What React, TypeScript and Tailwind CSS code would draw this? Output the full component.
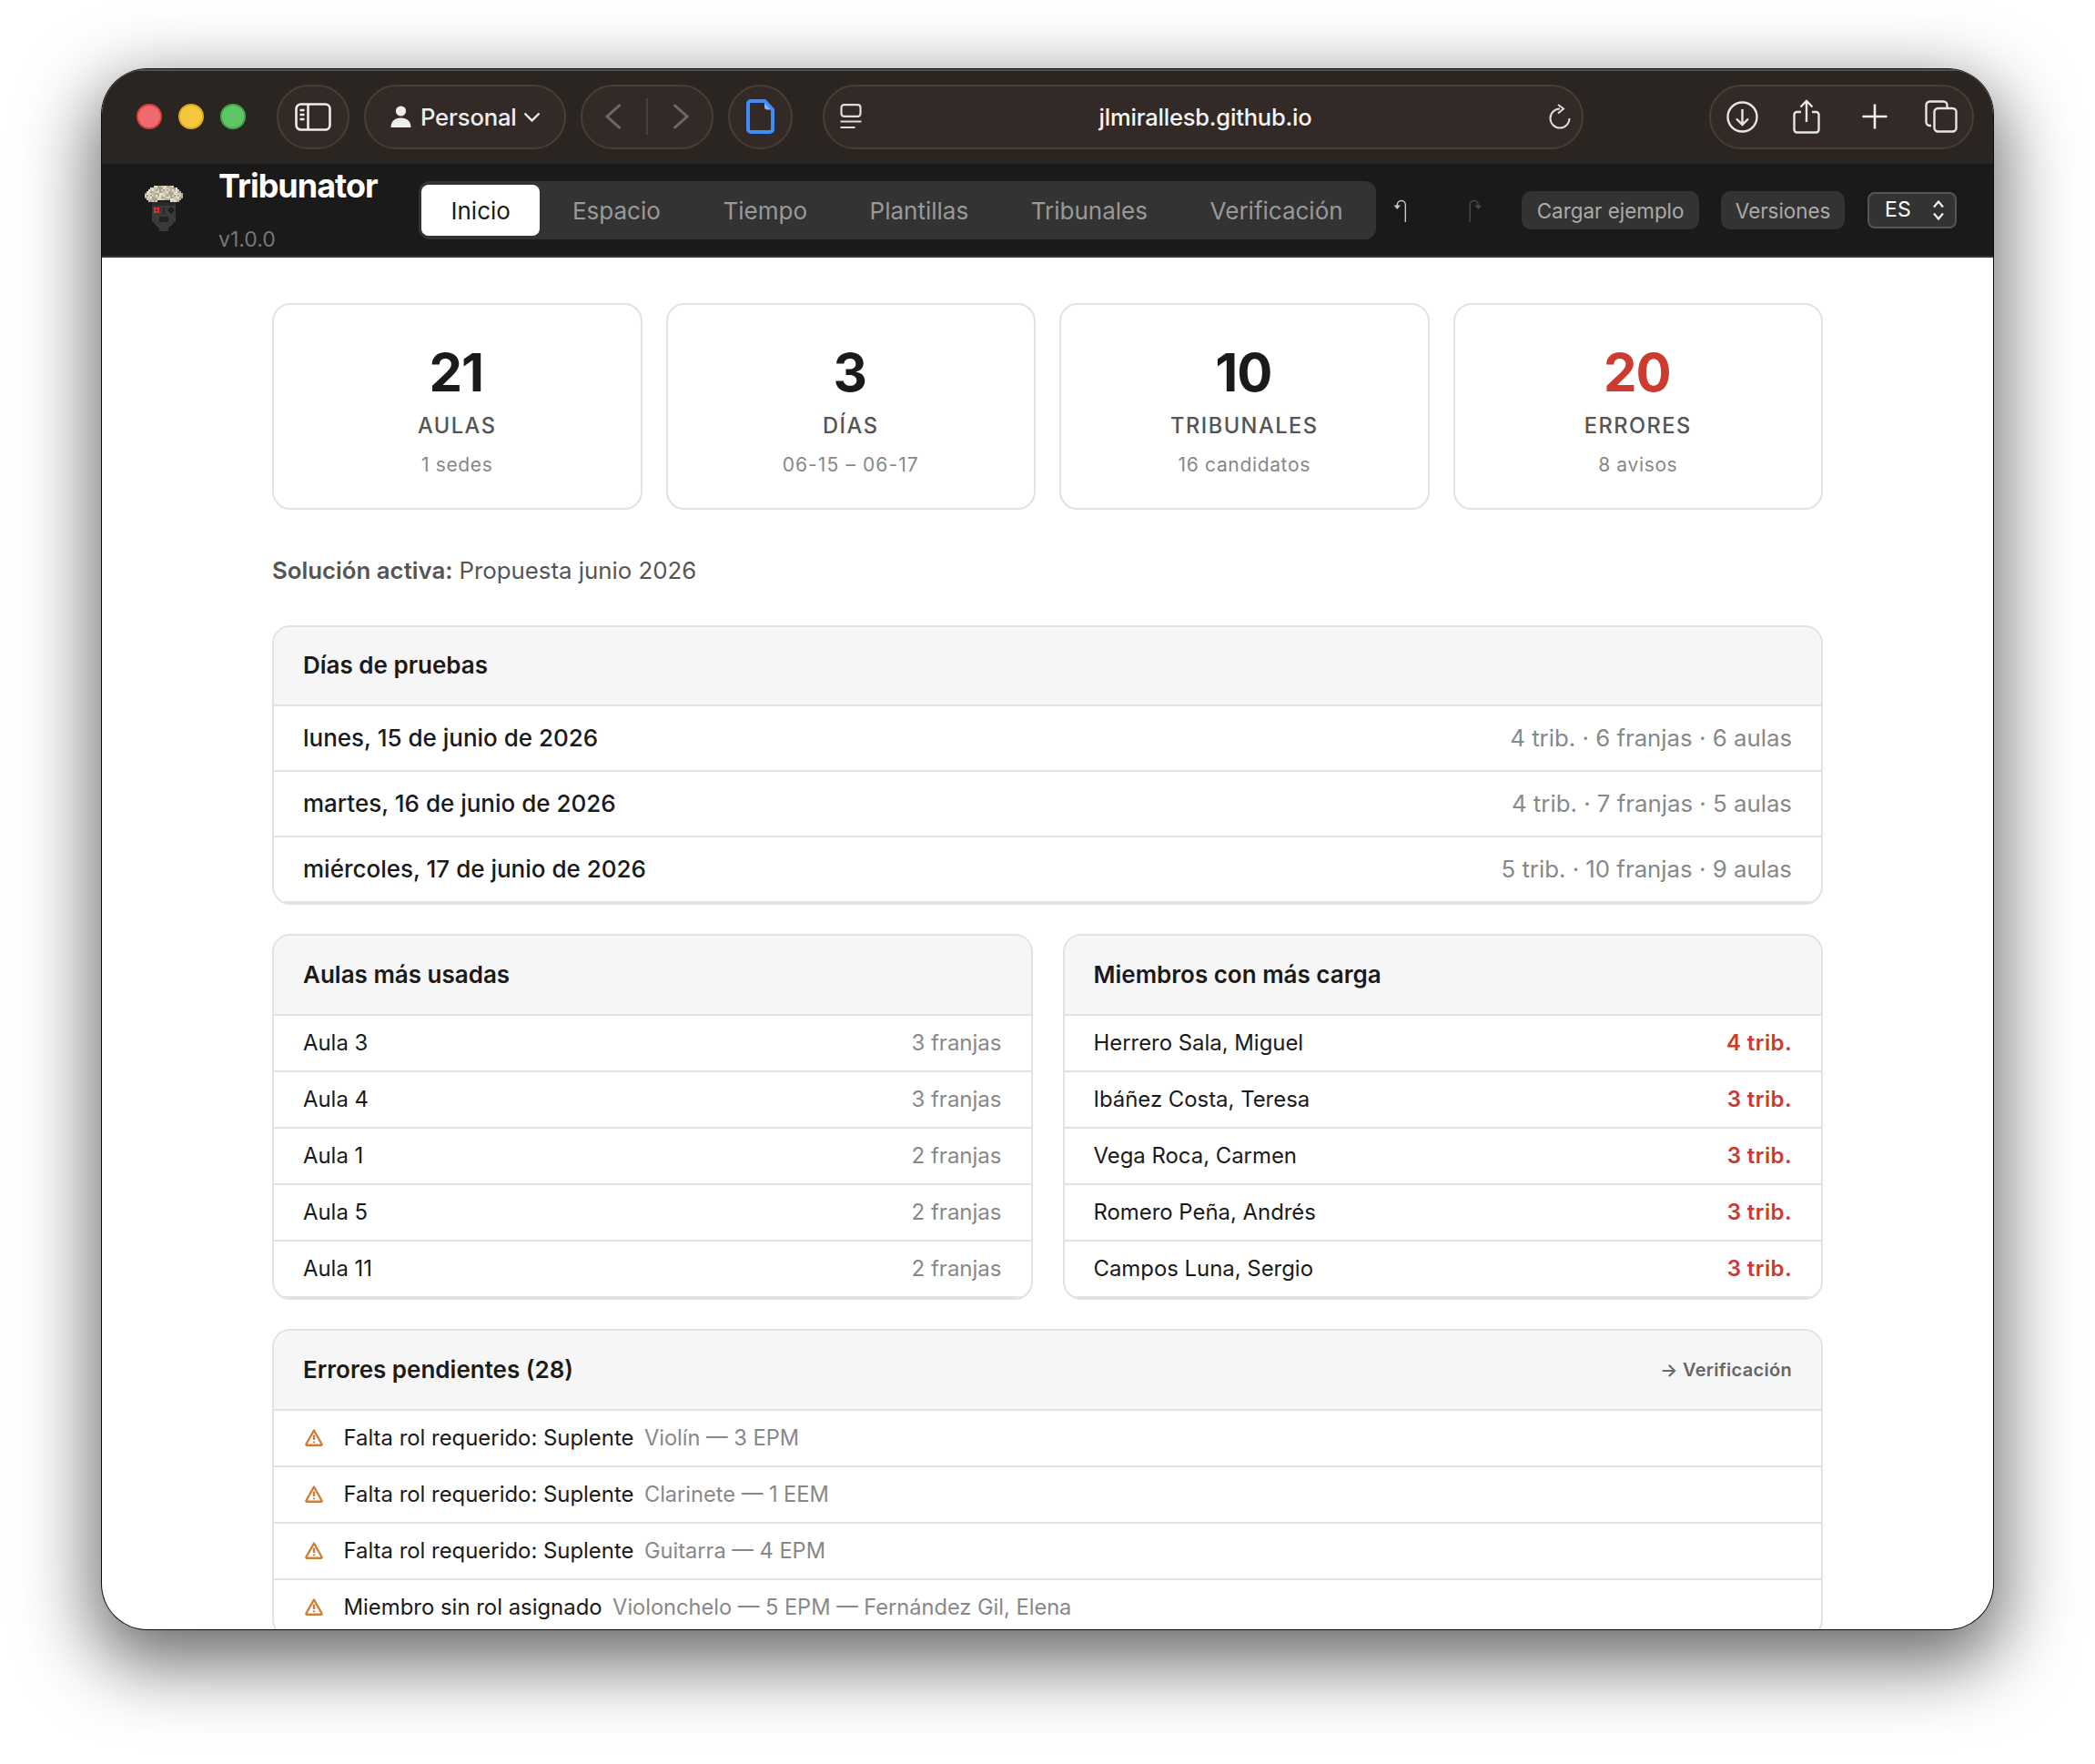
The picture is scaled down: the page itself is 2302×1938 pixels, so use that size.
import React from "react";

function Logo() {
  const cells: React.ReactNode[] = [];
  const capRows: [number, number][] = [[5, 15], [3, 17], [2, 18], [1, 19], [0, 20], [0, 20], [0, 20], [1, 19], [2, 18]];
  const faceRows: [number, number][] = [];
  for (let y = 9; y < 20; y++) faceRows[y] = [4, 16];
  faceRows[20] = [5, 15]; faceRows[21] = [6, 14]; faceRows[22] = [7, 13]; faceRows[23] = [8, 12]; faceRows[24] = [8, 12];
  const beige = ["#d6cfbb", "#b5ad98", "#e8e2d2", "#c9c1ac", "#a8a08b"];
  const dark = ["#3c3c3c", "#343434", "#414141", "#383838"];
  for (let y = 9; y < 25; y++) {
    const [a, b] = faceRows[y];
    for (let x = a; x <= b; x++) {
      let c = dark[(x * 3 + y * 5) % 4];
      if (y === 9 || y === 10) c = "#2a2a2a";
      if (x === 10 && y > 11 && y < 16) c = "#2c2c2c";
      if (y >= 12 && y <= 14 && x >= 5 && x <= 7) c = (y === 13 && x === 6) ? "#6d1f1c" : "#d8302a";
      if (y >= 12 && y <= 14 && x >= 13 && x <= 15) c = (x + y) % 2 === 0 ? "#141414" : "#2a2a2a";
      if (y >= 17 && y <= 19 && x >= 8 && x <= 12) c = "#222222";
      cells.push(<rect key={`f${x}-${y}`} x={x * 2} y={y * 2} width={2} height={2} fill={c} />);
    }
  }
  capRows.forEach(([a, b], y) => {
    for (let x = a; x <= b; x++) {
      if (y === 8 && x > 6 && x < 14) continue;
      const c = beige[(x * 7 + y * 11 + ((x * y) % 3)) % 5];
      cells.push(<rect key={`c${x}-${y}`} x={x * 2} y={y * 2} width={2} height={2} fill={c} />);
    }
  });
  return (
    <svg width="42" height="54" viewBox="0 0 42 54" className="shrink-0" shapeRendering="crispEdges">
      {cells}
    </svg>
  );
}

function Pill({ className, children }: { className: string; children: React.ReactNode }) {
  return (
    <div className={`h-[71px] rounded-full bg-[#332926] border-2 border-[#4a3d37] flex items-center shrink-0 ${className}`}>
      {children}
    </div>
  );
}

function TitleBar() {
  return (
    <div className="h-[104px] bg-[#2b2521] flex items-center pl-[38px] pb-[2px] shrink-0 border-t-2 border-[#55504c]">
      <div className="flex items-center gap-[18px] mr-[34px]">
        <span className="w-[28px] h-[28px] rounded-full border-2 bg-[#ee6a6e] border-[#d9403f]" />
        <span className="w-[28px] h-[28px] rounded-full border-2 bg-[#f4c73e] border-[#e2a822]" />
        <span className="w-[28px] h-[28px] rounded-full border-2 bg-[#60c565] border-[#43aa4b]" />
      </div>
      <Pill className="w-[80px] justify-center mr-[16px]">
        <svg width="40" height="31" viewBox="0 0 40 31" fill="none" stroke="#eeeeee" strokeWidth="2.6">
          <rect x="1.5" y="1.5" width="37" height="28" rx="5" />
          <path d="M14.5 1.5v28" />
          <path d="M5.5 8h5M5.5 13h5M5.5 18h5" strokeWidth="2.4" />
        </svg>
      </Pill>
      <Pill className="w-[222px] pl-[27px] mr-[16px]">
        <svg width="23" height="24" viewBox="0 0 23 24" fill="#eeeeee">
          <circle cx="11.5" cy="6" r="5.6" />
          <path d="M0.5 24c0-7 4.5-10.5 11-10.5s11 3.500 11 10.500z" />
        </svg>
        <span className="ml-[10px] pt-[2px] text-[25.7px] font-medium leading-none text-[#eeeeee] tracking-[-0.2px]">Personal</span>
        <svg width="19" height="11" viewBox="0 0 19 11" fill="none" stroke="#eeeeee" strokeWidth="2.4" className="ml-[7px]">
          <path d="M1.500 1.500l8 8 8-8" />
        </svg>
      </Pill>
      <Pill className="w-[146px] mr-[16px] justify-center">
        <svg width="20" height="30" viewBox="0 0 20 30" fill="none" stroke="#6f6864" strokeWidth="3">
          <path d="M17.500 2L3 15l14.500 13" />
        </svg>
        <span className="w-[2px] h-[40px] bg-[#4a3f3a] mx-[26px]" />
        <svg width="20" height="30" viewBox="0 0 20 30" fill="none" stroke="#6f6864" strokeWidth="3">
          <path d="M2.500 2L17 15 2.500 28" />
        </svg>
      </Pill>
      <Pill className="w-[71px] justify-center mr-[33px]">
        <svg width="31" height="38" viewBox="0 0 31 38" fill="none" stroke="#3f8cfb" strokeWidth="4" strokeLinejoin="round">
          <path d="M5 2h15.500L29 11.500V33a3 3 0 0 1-3 3H5a3 3 0 0 1-3-3V5a3 3 0 0 1 3-3z" />
          <path d="M20 4l7 7.500h-4a3 3 0 0 1-3-3z" fill="#7fb4ff" stroke="none" />
        </svg>
      </Pill>
      <Pill className="w-[836px] pl-[17px] pr-[12px] mr-[138px] justify-between">
        <svg width="24" height="28" viewBox="0 0 24 28" fill="none" stroke="#dddddd" strokeWidth="2.200">
          <rect x="1.500" y="1.200" width="21" height="12.600" rx="3" />
          <path d="M0.500 19.500h23M0.500 26h16" />
        </svg>
        <span className="pt-[2px] text-[25.5px] font-medium leading-none text-[#f4f4f4] tracking-[-0.2px]">jlmirallesb.github.io</span>
        <svg width="24" height="28" viewBox="0 0 24 28" fill="none" stroke="#dddddd" strokeWidth="2">
          <path d="M12 5.500a10.500 10.500 0 1 0 10.500 10.500" />
          <path d="M10 1l6 4.500-6 5" />
        </svg>
      </Pill>
      <Pill className="w-[291px] pl-[17px]">
        <svg width="35" height="35" viewBox="0 0 35 35" fill="none" stroke="#e6e6e6" strokeWidth="2.400">
          <circle cx="17.500" cy="17.500" r="16" />
          <path d="M17.500 9v17M11 19.500l6.500 6.500 6.500-6.500" />
        </svg>
        <svg width="30" height="38" viewBox="0 0 30 38" fill="none" stroke="#e6e6e6" strokeWidth="2.400" className="ml-[38px]">
          <path d="M9 14H4.500a3 3 0 0 0-3 3v16.500a3 3 0 0 0 3 3h21a3 3 0 0 0 3-3V17a3 3 0 0 0-3-3H21" />
          <path d="M15 25V2M8.500 8.500L15 2l6.500 6.500" />
        </svg>
        <svg width="28" height="28" viewBox="0 0 28 28" fill="none" stroke="#eeeeee" strokeWidth="2.600" className="ml-[45.500px]">
          <path d="M14 0.500v27M0.500 14h27" />
        </svg>
        <svg width="36" height="36" viewBox="0 0 36 36" fill="none" stroke="#e6e6e6" strokeWidth="2.400" className="ml-[41px]">
          <path d="M7 28H5.500a4 4 0 0 1-4-4V5.500a4 4 0 0 1 4-4h15a4 4 0 0 1 4 4V8" />
          <rect x="10.500" y="9" width="24" height="25.500" rx="4" />
        </svg>
      </Pill>
    </div>
  );
}

function Tab({ label, active }: { label: string; active?: boolean }) {
  return (
    <div
      className={
        active
          ? "h-[56px] px-[32.500px] mr-[-1px] pt-[2px] flex items-center rounded-[8px] bg-white text-[#1a1a1a] text-[26px] leading-none"
          : "h-[56px] px-[32px] pt-[2px] flex items-center rounded-[8px] text-[#999999] text-[26px] leading-none"
      }
    >
      {label}
    </div>
  );
}

function Header() {
  return (
    <div className="h-[103px] bg-[#1a1a1a] border-b-2 border-[#333333] flex items-center shrink-0">
      <div className="ml-[47px] mr-[39px]"><Logo /></div>
      <div className="w-[220px] h-full flex flex-col shrink-0">
        <div className="mt-[2px] text-[36px] leading-[44px] font-bold text-white tracking-[-1px]">Tribunator</div>
        <div className="mt-[24px] text-[23px] leading-[26px] text-[#777777]">v1.0.0</div>
      </div>
      <div className="h-[64px] rounded-[12px] bg-[#333333] flex items-center gap-[4.6px] pl-[3px] pr-[4px] shrink-0">
        <Tab label="Inicio" active />
        <Tab label="Espacio" />
        <Tab label="Tiempo" />
        <Tab label="Plantillas" />
        <Tab label="Tribunales" />
        <Tab label="Verificación" />
      </div>
      <svg width="15" height="25" viewBox="0 0 15 25" fill="none" stroke="#c8c8c8" strokeWidth="1.400" className="ml-[19px] mt-[2px] shrink-0">
        <path d="M13.300 25V6a4.500 4.500 0 0 0-9 0v1" />
        <path d="M0.500 6.500h7.500l-3.750 4.500z" fill="#c8c8c8" stroke="none" />
      </svg>
      <svg width="15" height="25" viewBox="0 0 15 25" fill="none" stroke="#4a4a4a" strokeWidth="1.400" className="ml-[68.500px] mt-[2px] shrink-0">
        <path d="M1.200 25V6a4.500 4.500 0 0 1 9 0v1" />
        <path d="M6.500 6.500h7.500l-3.750 4.500z" fill="#4a4a4a" stroke="none" />
      </svg>
      <button className="ml-[43px] h-[42px] w-[195px] pt-[3px] rounded-[10px] bg-[#333333] text-[#aaaaaa] text-[22.4px] leading-none">Cargar ejemplo</button>
      <button className="ml-[24px] h-[42px] w-[136px] pt-[3px] rounded-[10px] bg-[#333333] text-[#aaaaaa] text-[22.4px] leading-none">Versiones</button>
      <div className="ml-[25px] h-[40px] w-[98px] rounded-[8px] bg-[#333333] border-2 border-[#555555] flex items-center pl-[17px] text-white text-[23px] leading-none">
        <span>ES</span>
        <svg width="14" height="24" viewBox="0 0 14 24" fill="none" stroke="#f0f0f0" strokeWidth="2.200" className="ml-[23px]">
          <path d="M2 8.500l5-6 5 6M2 15.500l5 6 5-6" />
        </svg>
      </div>
    </div>
  );
}

function Stat({ n, label, sub, red, wide }: { n: string; label: string; sub: string; red?: boolean; wide?: boolean }) {
  return (
    <div className="h-[227px] rounded-[20px] border-2 border-[#e2e2e2] flex flex-col items-center pt-[44px]">
      <div className={red ? "pr-[2px] text-[58px] leading-[60px] font-bold text-[#cc3a30] tracking-[-1px]" : "pr-[2px] text-[58px] leading-[60px] font-bold text-[#1a1a1a] tracking-[-1px]"}>{n}</div>
      <div className="mt-[14px] text-[23.6px] leading-[30px] font-medium text-[#555555] tracking-[1.500px]">{label}</div>
      <div className={wide ? "mt-[14px] text-[21px] leading-[28px] text-[#888888] tracking-[1.100px]" : "mt-[14px] text-[21px] leading-[28px] text-[#888888] tracking-[0.650px]"}>{sub}</div>
    </div>
  );
}

function PanelHead({ title, right, short }: { title: string; right?: string; short?: boolean }) {
  return (
    <div className={short ? "h-[86.500px] bg-[#f6f6f6] border-b-2 border-[#e2e2e2] flex items-center justify-between px-[32px] shrink-0" : "h-[88px] bg-[#f6f6f6] border-b-2 border-[#e2e2e2] flex items-center justify-between px-[32px] shrink-0"}>
      <span className="text-[26px] font-semibold leading-none text-[#1a1a1a]">{title}</span>
      {right && <span className="text-[20px] font-semibold leading-none text-[#666666] tracking-[0.300px]">{right}</span>}
    </div>
  );
}

function DayRow({ l, r }: { l: string; r: string }) {
  return (
    <div className="h-[72px] border-b-2 border-[#e2e2e2] flex items-center justify-between px-[32px]">
      <span className="text-[26px] font-medium leading-none text-[#1a1a1a]">{l}</span>
      <span className="text-[25.8px] leading-none text-[#888888]">{r}</span>
    </div>
  );
}

function ListRow({ l, r, red }: { l: string; r: string; red?: boolean }) {
  return (
    <div className="h-[62px] border-b-2 border-[#e2e2e2] flex items-center justify-between px-[32px]">
      <span className="text-[23.9px] leading-none text-[#1a1a1a]">{l}</span>
      <span className={red ? "text-[24px] font-semibold leading-none text-[#cc3a30] tracking-[0.400px]" : "text-[24px] leading-none text-[#888888]"}>{r}</span>
    </div>
  );
}

function WarnRow({ t, d }: { t: string; d: string }) {
  return (
    <div className="h-[62px] border-b-2 border-[#e2e2e2] flex items-center pl-[34px] shrink-0">
      <svg width="20" height="19" viewBox="0 0 20 19" fill="none" stroke="#cc7f38" strokeWidth="2.400" strokeLinejoin="round" className="shrink-0 mb-[2px]">
        <path d="M10 1.500L1.500 16.500a0.800 0.800 0 0 0 0.700 1.200h15.600a0.800 0.800 0 0 0 0.700-1.200z" />
        <path d="M10 6.500v5.500M10 13.500v1.800" />
      </svg>
      <span className="ml-[22.500px] text-[23.9px] leading-none text-[#1a1a1a]">{t}</span>
      <span className="ml-[11.500px] text-[23.6px] leading-none text-[#888888]">{d}</span>
    </div>
  );
}

export default function App() {
  const panel = "rounded-[20px] border-2 border-[#e2e2e2] overflow-hidden";
  return (
    <div className="w-[2302px] h-[1938px] bg-white overflow-hidden pt-[76px] pl-[112px]" style={{ fontFamily: 'Inter, "Liberation Sans", sans-serif' }}>
      <div className="w-[2078px] h-[1714px] rounded-[50px] overflow-hidden bg-white flex flex-col shadow-[0_28px_80px_10px_rgba(0,0,0,0.58),0_0_0_1px_#111111]">
        <TitleBar />
        <Header />
        <div className="flex-1 overflow-hidden px-[187px] pt-[49.500px]">
          <div className="grid grid-cols-4 gap-[26px]">
            <Stat n="21" label="AULAS" sub="1 sedes" />
            <Stat n="3" label="DÍAS" sub="06-15 – 06-17" wide />
            <Stat n="10" label="TRIBUNALES" sub="16 candidatos" />
            <Stat n="20" label="ERRORES" sub="8 avisos" red />
          </div>
          <div className="mt-[51.500px] h-[32px] flex items-center text-[25.8px] leading-none text-[#555555]">
            <span className="font-semibold">Solución activa:</span>
            <span className="ml-[7px]">Propuesta junio 2026</span>
          </div>
          <div className={`mt-[44px] ${panel}`}>
            <PanelHead title="Días de pruebas" short />
            <DayRow l="lunes, 15 de junio de 2026" r="4 trib. · 6 franjas · 6 aulas" />
            <DayRow l="martes, 16 de junio de 2026" r="4 trib. · 7 franjas · 5 aulas" />
            <DayRow l="miércoles, 17 de junio de 2026" r="5 trib. · 10 franjas · 9 aulas" />
          </div>
          <div className="mt-[32.500px] grid grid-cols-2 gap-[33px]">
            <div className={panel}>
              <PanelHead title="Aulas más usadas" />
              <ListRow l="Aula 3" r="3 franjas" />
              <ListRow l="Aula 4" r="3 franjas" />
              <ListRow l="Aula 1" r="2 franjas" />
              <ListRow l="Aula 5" r="2 franjas" />
              <ListRow l="Aula 11" r="2 franjas" />
            </div>
            <div className={panel}>
              <PanelHead title="Miembros con más carga" />
              <ListRow l="Herrero Sala, Miguel" r="4 trib." red />
              <ListRow l="Ibáñez Costa, Teresa" r="3 trib." red />
              <ListRow l="Vega Roca, Carmen" r="3 trib." red />
              <ListRow l="Romero Peña, Andrés" r="3 trib." red />
              <ListRow l="Campos Luna, Sergio" r="3 trib." red />
            </div>
          </div>
          <div className={`mt-[32px] ${panel}`}>
            <PanelHead title="Errores pendientes (28)" right="→ Verificación" />
            <WarnRow t="Falta rol requerido: Suplente" d="Violín — 3 EPM" />
            <WarnRow t="Falta rol requerido: Suplente" d="Clarinete — 1 EEM" />
            <WarnRow t="Falta rol requerido: Suplente" d="Guitarra — 4 EPM" />
            <WarnRow t="Miembro sin rol asignado" d="Violonchelo — 5 EPM — Fernández Gil, Elena" />
          </div>
        </div>
      </div>
    </div>
  );
}
